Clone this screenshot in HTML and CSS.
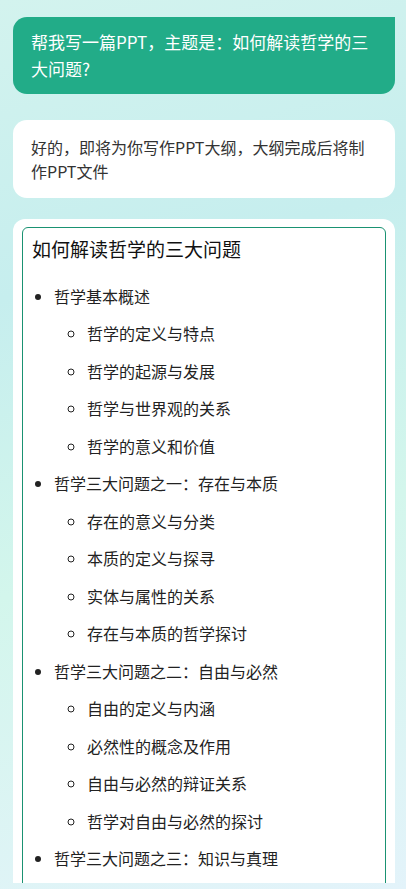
FILE: index.html
```html
<!DOCTYPE html>
<html lang="zh-CN">
<head>
    <meta charset="UTF-8">
    <meta name="viewport" content="width=device-width, initial-scale=1.0">
    <title>PPT助手</title>
    <link rel="stylesheet" href="styles.css">
</head>
<body>
    <div id="chat">
        <!-- 用户消息 -->
        <div class="msg msg-user">帮我写一篇PPT，主题是：如何解读哲学的三大问题?</div>

        <!-- 助手回复 -->
        <div class="msg msg-bot">好的，即将为你写作PPT大纲，大纲完成后将制作PPT文件</div>

        <!-- 大纲卡片 -->
        <div class="outline-card">
            <div class="outline-box">
                <h3 class="outline-title">如何解读哲学的三大问题</h3>
                <ul class="outline-list">
                    <li>哲学基本概述
                        <ul>
                            <li>哲学的定义与特点</li>
                            <li>哲学的起源与发展</li>
                            <li>哲学与世界观的关系</li>
                            <li>哲学的意义和价值</li>
                        </ul>
                    </li>
                    <li>哲学三大问题之一：存在与本质
                        <ul>
                            <li>存在的意义与分类</li>
                            <li>本质的定义与探寻</li>
                            <li>实体与属性的关系</li>
                            <li>存在与本质的哲学探讨</li>
                        </ul>
                    </li>
                    <li>哲学三大问题之二：自由与必然
                        <ul>
                            <li>自由的定义与内涵</li>
                            <li>必然性的概念及作用</li>
                            <li>自由与必然的辩证关系</li>
                            <li>哲学对自由与必然的探讨</li>
                        </ul>
                    </li>
                    <li>哲学三大问题之三：知识与真理</li>
                </ul>
            </div>
        </div>
    </div>
</body>
</html>
```

FILE: styles.css
```css
html, body {
    margin: 0;
    padding: 0;
    height: 100%;
}

body {
    background: linear-gradient(165deg, #d3f3ee 0%, #c6eeee 30%, #d3f6ec 60%, #e3f3fa 100%);
    font-family: 'Microsoft YaHei', 'Noto Sans CJK SC', sans-serif;
    overflow: hidden;
}

#chat {
    display: flex;
    flex-direction: column;
    padding: 17px 11px 0 13px;
}

.msg {
    border-radius: 14px;
    padding: 12px 18px;
}

.msg-user {
    background: #22ac88;
    color: white;
    font-size: 17px;
    line-height: 27px;
    border-top-right-radius: 0;
    padding: 11px 18px 12px;
}

.msg-bot {
    margin-top: 26px;
    background: white;
    color: #333;
    font-size: 16px;
    line-height: 24px;
    padding: 15px 18px;
}

.outline-card {
    margin-top: 21px;
    background: white;
    border-radius: 12px 12px 0 0;
    padding: 8px 9px 0;
    height: 656px;
    overflow: hidden;
}

.outline-box {
    border: 1px solid #1a9272;
    border-radius: 6px;
    padding: 6px 9px 20px;
    min-height: 700px;
}

.outline-title {
    margin: 0 0 13px;
    font-size: 19px;
    font-weight: normal;
    line-height: 30px;
    color: #111;
}

.outline-list {
    margin: 0;
    padding-left: 22px;
    list-style: disc;
    color: #222;
    font-size: 16px;
    line-height: 24px;
}

.outline-list li {
    padding: 6.75px 0;
}

.outline-list ul {
    margin: 6.75px 0 -6.75px;
    padding-left: 33px;
    list-style: circle;
}
```
